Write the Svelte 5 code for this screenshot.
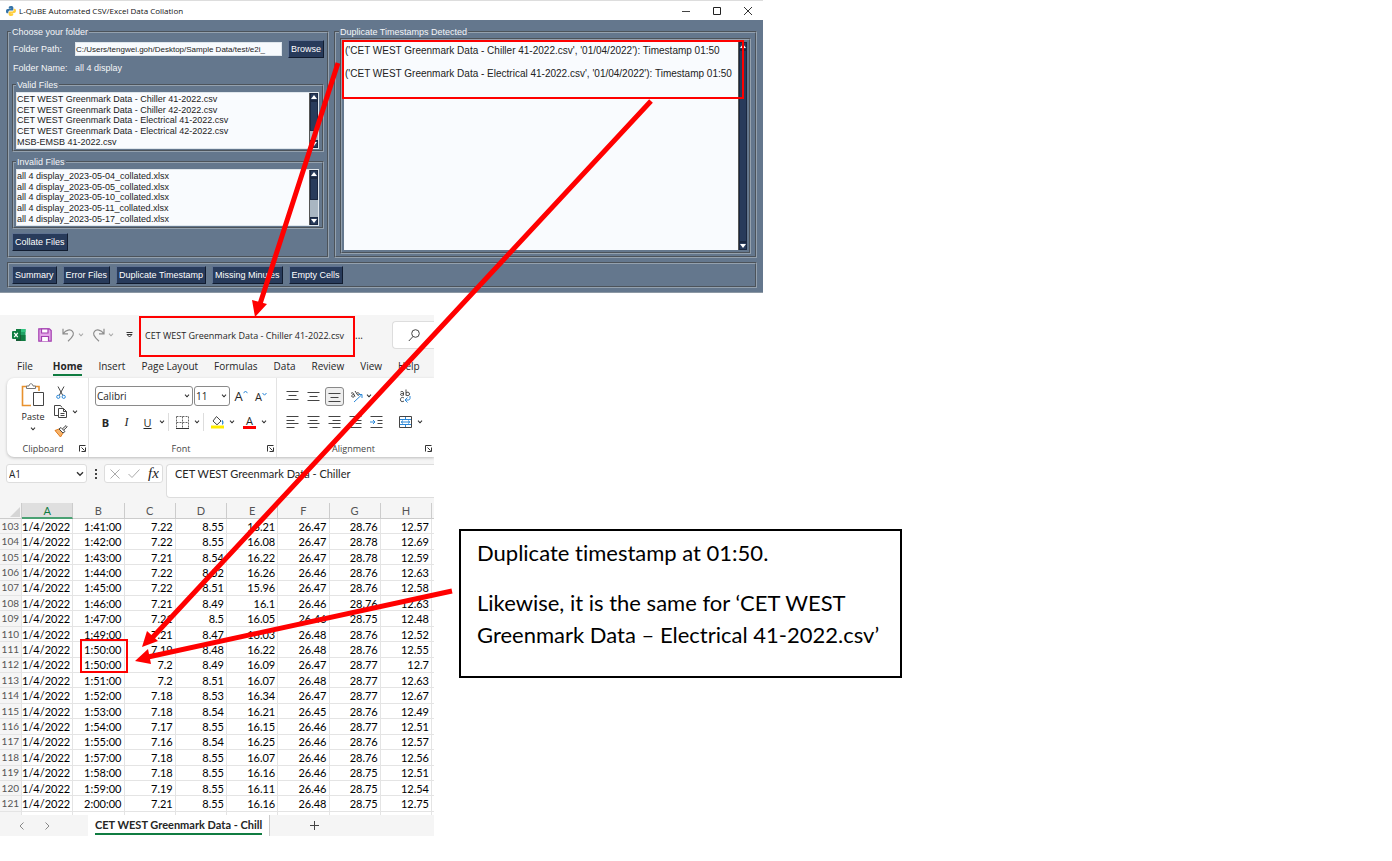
<script>
  const validFiles = [
    'CET WEST Greenmark Data - Chiller 41-2022.csv',
    'CET WEST Greenmark Data - Chiller 42-2022.csv',
    'CET WEST Greenmark Data - Electrical 41-2022.csv',
    'CET WEST Greenmark Data - Electrical 42-2022.csv',
    'MSB-EMSB 41-2022.csv'
  ];
  const invalidFiles = ['04', '05', '10', '11', '17'].map((d) => `all 4 display_2023-05-${d}_collated.xlsx`);
  const reports = ['Summary', 'Error Files', 'Duplicate Timestamp', 'Missing Minutes', 'Empty Cells'];
  const duplicates = [
    "('CET WEST Greenmark Data - Chiller 41-2022.csv', '01/04/2022'): Timestamp 01:50",
    "('CET WEST Greenmark Data - Electrical 41-2022.csv', '01/04/2022'): Timestamp 01:50"
  ];
  const tabs = ['File', 'Home', 'Insert', 'Page Layout', 'Formulas', 'Data', 'Review', 'View', 'Help'];
  const columns = ['A', 'B', 'C', 'D', 'E', 'F', 'G', 'H'];
  const readings = [
    ['1:41:00', '7.22', '8.55', '16.21', '26.47', '28.76', '12.57'],
    ['1:42:00', '7.22', '8.55', '16.08', '26.47', '28.78', '12.69'],
    ['1:43:00', '7.21', '8.54', '16.22', '26.47', '28.78', '12.59'],
    ['1:44:00', '7.22', '8.52', '16.26', '26.46', '28.76', '12.63'],
    ['1:45:00', '7.22', '8.51', '15.96', '26.47', '28.76', '12.58'],
    ['1:46:00', '7.21', '8.49', '16.1', '26.46', '28.76', '12.63'],
    ['1:47:00', '7.21', '8.5', '16.05', '26.46', '28.75', '12.48'],
    ['1:49:00', '7.21', '8.47', '16.03', '26.48', '28.76', '12.52'],
    ['1:50:00', '7.19', '8.48', '16.22', '26.48', '28.76', '12.55'],
    ['1:50:00', '7.2', '8.49', '16.09', '26.47', '28.77', '12.7'],
    ['1:51:00', '7.2', '8.51', '16.07', '26.48', '28.77', '12.63'],
    ['1:52:00', '7.18', '8.53', '16.34', '26.47', '28.77', '12.67'],
    ['1:53:00', '7.18', '8.54', '16.21', '26.45', '28.76', '12.49'],
    ['1:54:00', '7.17', '8.55', '16.15', '26.46', '28.77', '12.51'],
    ['1:55:00', '7.16', '8.54', '16.25', '26.46', '28.76', '12.57'],
    ['1:57:00', '7.18', '8.55', '16.07', '26.46', '28.76', '12.56'],
    ['1:58:00', '7.18', '8.55', '16.16', '26.46', '28.75', '12.51'],
    ['1:59:00', '7.19', '8.55', '16.11', '26.46', '28.75', '12.54'],
    ['2:00:00', '7.21', '8.55', '16.16', '26.48', '28.75', '12.75']
  ];
</script>

{#snippet chevron(tone = '#333')}
  <svg class="chev" width="6" height="4" viewBox="0 0 6 4"><path d="M1 .7 3 2.8 5 .7" fill="none" stroke={tone} stroke-width="1.1" /></svg>
{/snippet}

{#snippet launcher()}
  <button class="bare launcher" aria-label="More options">
    <svg width="7" height="7" viewBox="0 0 7 7" fill="none" stroke="#333"><path d="M.5 6.5v-6h6M2.5 2.5l3 3M6.5 2.5v4h-4" /></svg>
  </button>
{/snippet}

{#snippet lines(rows)}
  <svg width="13" height="12" viewBox="0 0 13 12" stroke="#444" fill="none"><path d={rows} /></svg>
{/snippet}

{#snippet scrollbar(kind)}
  <span class="scroll {kind}" aria-hidden="true">
    <i class="step"><svg width="6" height="4" viewBox="0 0 6 4"><path d="M0 4h6L3 0z" fill="#fff" /></svg></i>
    <i class="thumb"></i>
    <i class="step"><svg width="6" height="4" viewBox="0 0 6 4"><path d="M0 0h6L3 4z" fill="#fff" /></svg></i>
  </span>
{/snippet}

<main>
  <section class="collator" aria-label="Data collation">
    <header class="caption">
      <svg width="10" height="10" viewBox="0 0 20 20">
        <path d="M9.8 0C6 0 5.5 1.7 5.5 3v2.400h4.800v.8H3.300C1.300 6.200 0 7.700 0 10.300s1.200 4.300 3 4.300h1.700v-2.400c0-1.800 1.500-3 3.100-3h4.600c1.500 0 2.300-1.200 2.300-2.400V3c0-1.700-1.600-3-4.900-3z" fill="#3573a6" />
        <path d="M10.200 20c3.800 0 4.300-1.700 4.300-3v-2.400H9.700v-.8h7c2 0 3.300-1.500 3.300-4.100s-1.200-4.300-3-4.300h-1.700v2.400c0 1.800-1.500 3-3.100 3H7.600c-1.500 0-2.300 1.200-2.300 2.400V17c0 1.700 1.600 3 4.900 3z" fill="#ffcf3f" />
      </svg>
      <span>L-QuBE Automated CSV/Excel Data Collation</span>
      <button class="bare" aria-label="Minimize"><svg width="8" height="8" viewBox="0 0 8 8" stroke="#444"><path d="M0 4.500h8" /></svg></button>
      <button class="bare" aria-label="Maximize"><svg width="8" height="8" viewBox="0 0 8 8" fill="none" stroke="#222"><path d="M.5 .5h7v7h-7z" /></svg></button>
      <button class="bare" aria-label="Close"><svg width="8" height="8" viewBox="0 0 8 8" stroke="#333"><path d="M0 0l8 8M8 0l-8 8" /></svg></button>
    </header>

    <div class="body">
      <fieldset class="chooser">
        <legend>Choose your folder</legend>
        <div class="path">
          <label for="folder">Folder Path:</label>
          <input id="folder" value="C:/Users/tengwei.goh/Desktop/Sample Data/test/e2i_" />
          <button class="push">Browse</button>
        </div>
        <div class="path name"><span>Folder Name:</span><span>all 4 display</span></div>
        <fieldset class="files">
          <legend>Valid Files</legend>
          <div class="list">
            <ul>{#each validFiles as f}<li>{f}</li>{/each}</ul>
            {@render scrollbar('long')}
          </div>
        </fieldset>
        <fieldset class="files">
          <legend>Invalid Files</legend>
          <div class="list">
            <ul>{#each invalidFiles as f}<li>{f}</li>{/each}</ul>
            {@render scrollbar('short')}
          </div>
        </fieldset>
        <button class="push">Collate Files</button>
      </fieldset>

      <fieldset class="result">
        <legend>Duplicate Timestamps Detected</legend>
        <div class="list output">
          <div class="log">{#each duplicates as d}<p>{d}</p>{/each}</div>
          {@render scrollbar('full')}
        </div>
      </fieldset>

      <nav class="reports">
        {#each reports as r}<button class="push">{r}</button>{/each}
      </nav>
    </div>
  </section>

  <div class="lower">
    <section class="sheet" aria-label="Spreadsheet">
      <header class="quick">
        <svg class="xl" width="14" height="14" viewBox="0 0 14 14">
          <path d="M4 1h9.500v12H4z" fill="#21a366" /><path d="M4 1h5v6H4z" fill="#107c41" /><path d="M9 7h4.500v6H9z" fill="#107c41" /><path d="M4 7h5v6H4z" fill="#185c37" />
          <path d="M9 1h4.500v3H9z" fill="#33c481" /><rect y="3" width="8" height="8" rx="1" fill="#107c41" /><path d="M2.200 4.800l3.600 4.400M5.800 4.800L2.200 9.200" stroke="#fff" stroke-width="1.300" />
        </svg>
        <button class="bare save" aria-label="Save"><svg width="14" height="14" viewBox="0 0 14 14" fill="#e3a5e8" stroke="#a33fb0" stroke-width="1.200"><path d="M.8 .8h10.600l1.800 1.800v10.600H.8z" /><path d="M3.500 .8h6.500v4.200H3.500zM3.500 13.200V8.500h7v4.700" fill="#fff" /></svg></button>
        <button class="bare undo" aria-label="Undo"><svg width="13" height="14" viewBox="0 0 13 14" fill="none" stroke="#8c8c8c" stroke-width="1.200"><path d="M1 .8v5h5M1.300 5.500C4 1.500 8.500 1 10.500 3.300S11.500 8.500 6 13.200" /></svg></button>
        {@render chevron('#aaa')}
        <button class="bare redo" aria-label="Redo"><svg width="13" height="14" viewBox="0 0 13 14" fill="none" stroke="#8c8c8c" stroke-width="1.200"><path d="M12 .8v5H7M11.700 5.500C9 1.500 4.500 1 2.500 3.300S1.500 8.500 7 13.200" /></svg></button>
        {@render chevron('#aaa')}
        <button class="bare more" aria-label="Customize toolbar"><svg width="7" height="6" viewBox="0 0 7 6"><path d="M.5 .5h6" stroke="#333" /><path d="M1 2.500h5L3.500 5z" fill="none" stroke="#333" /></svg></button>
        <span class="file">CET WEST Greenmark Data - Chiller 41-2022.csv</span>
        <span class="dots">...</span>
        <button class="search" aria-label="Search"><svg width="12" height="13" viewBox="0 0 12 13" fill="none" stroke="#444"><circle cx="7.500" cy="4.500" r="3.800" /><path d="M5 7.500L.8 12" /></svg></button>
      </header>

      <nav class="tabs">
        {#each tabs as t}<button class="bare" class:on={t === 'Home'}>{t}</button>{/each}
      </nav>

      <div class="ribbon">
        <div class="group clip">
          <div class="tools">
            <button class="bare paste">
              <svg width="24" height="26" viewBox="0 0 24 26" fill="none">
                <path d="M6 3.500H1.500v19H10M13.500 3.500H18V8" stroke="#e8912d" stroke-width="1.600" />
                <path d="M5.500 5.500V3H8c0-3 4-3 4 0h2.500v2.500z" fill="#fff" stroke="#777" /><path d="M12.500 9.500h10v13h-10z" fill="#fff" stroke="#444" />
              </svg>
              Paste
              {@render chevron()}
            </button>
            <div class="side">
              <button class="bare" aria-label="Cut"><svg width="10" height="13" viewBox="0 0 10 13" fill="none"><path d="M2 .5l4.800 9M8 .5L3.200 9.500" stroke="#444" /><circle cx="2.300" cy="10.800" r="1.600" stroke="#2b88d8" /><circle cx="7.700" cy="10.800" r="1.600" stroke="#2b88d8" /></svg></button>
              <button class="bare" aria-label="Copy"><svg width="13" height="13" viewBox="0 0 13 13" fill="none" stroke="#444"><path d="M4 10.500H.5V.5h6l1.500 2" /><path d="M4.500 3.500h5l3 3v6h-8zM9.500 3.500v3h3M6.500 8.500h4M6.500 10.500h4" /></svg></button>
              {@render chevron()}
              <button class="bare" aria-label="Format painter"><svg width="14" height="12" viewBox="0 0 14 12"><path d="M1 5.500L5 4l4 4-2.500 4z" fill="#f6b36b" stroke="#e07a1a" /><path d="M5 4l2-1.500 4 4L9 8zM8.500 3.800L12 .6l1.200 1.200L9.800 5" fill="#fff" stroke="#444" /></svg></button>
            </div>
          </div>
          <footer><span>Clipboard</span>{@render launcher()}</footer>
        </div>

        <div class="group font">
          <div class="rowa">
            <span class="combo wide"><select aria-label="Font name"><option>Calibri</option></select>{@render chevron()}</span>
            <span class="combo"><select aria-label="Font size"><option>11</option></select>{@render chevron()}</span>
            <button class="bare grow" aria-label="Increase font size">A<svg width="5" height="4" viewBox="0 0 5 4"><path d="M.5 3.200L2.500 1l2 2.200" fill="none" stroke="#2b88d8" /></svg></button>
            <button class="bare grow small" aria-label="Decrease font size">A<svg width="5" height="4" viewBox="0 0 5 4"><path d="M.5 1L2.500 3.200l2-2.200" fill="none" stroke="#2b88d8" /></svg></button>
          </div>
          <div class="rowb">
            <button class="bare w21"><b>B</b></button>
            <button class="bare w21"><em>I</em></button>
            <button class="bare w21"><u>U</u></button>
            {@render chevron()}
            <i class="bar"></i>
            <button class="bare w21" aria-label="Borders"><svg width="13" height="13" viewBox="0 0 13 13" fill="none" stroke="#666"><path d="M.5 .5h12M.5 6.500h12M.5 .5v12M6.500 .5v12M12.500 .5v12" stroke-dasharray="2 1" /><path d="M0 12.500h13" stroke="#333" /></svg></button>
            {@render chevron()}
            <i class="bar"></i>
            <button class="bare w21" aria-label="Fill colour"><svg width="14" height="14" viewBox="0 0 14 14" fill="none"><path d="M5.500 1.500l4.500 4.500-4 3.800L2 6z" stroke="#444" /><path d="M11 5.500c1.500 2 .8 3.500 0 3.500" stroke="#2b88d8" stroke-width="1.300" /><path d="M0 12h13" stroke="#ffed00" stroke-width="3" /></svg></button>
            {@render chevron()}
            <button class="bare ink" aria-label="Font colour">A</button>
            {@render chevron()}
          </div>
          <footer><span>Font</span>{@render launcher()}</footer>
        </div>

        <div class="group align">
          <div class="rowa">
            <button class="bare w21" aria-label="Top align">{@render lines('M.5 1.500h12M2.500 5.500h8M.5 9.500h12')}</button>
            <button class="bare w21" aria-label="Middle align">{@render lines('M.5 2.500h12M2.500 6.500h8M.5 10.500h12')}</button>
            <button class="bare w21 picked" aria-label="Bottom align">{@render lines('M.5 3.500h12M2.500 7.500h8M.5 11.500h12')}</button>
            <button class="bare w21" aria-label="Orientation"><svg width="14" height="13" viewBox="0 0 14 13" fill="none"><path d="M2 3.500c1-1.500 3-.5 3 1L6 6.500M4.800 4.500c-2 0-2.800 1.500-1.500 2.500s2.500-1 2-2M6 1l3 4.500M7.500 3.500c1.500-2 4 0 2 2" stroke="#444" /><path d="M5 12l7.500-7M9.500 4.500H13V8" stroke="#2b88d8" /></svg></button>
            {@render chevron()}
            <i class="bar none"></i>
            <button class="bare w21" aria-label="Wrap text"><svg width="12" height="14" viewBox="0 0 12 14" fill="none"><path d="M1.500 3c2-1.500 3 0 3 1v2.500M4.500 4.500c-2-.2-3 0-3 1s2 1.300 3 0M7 .5v6M7 4c1-1.500 3.500-1 3.500 1S8 7 7 6M5 9c-2-1.500-3.800 0-3.500 2s2 2 3.500 1" stroke="#444" /><path d="M11 7v2.500c0 1-1 1.500-2 1.500H6.500M8.500 8.500L6 11l2.500 2.500" stroke="#2b88d8" /></svg></button>
          </div>
          <div class="rowb">
            <button class="bare w21" aria-label="Align left">{@render lines('M.5 .5h12M.5 4.500h8M.5 7.500h12M.5 11.500h8')}</button>
            <button class="bare w21" aria-label="Center">{@render lines('M.5 .5h12M2.500 4.500h8M.5 7.500h12M2.500 11.500h8')}</button>
            <button class="bare w21" aria-label="Align right">{@render lines('M.5 .5h12M4.500 4.500h8M.5 7.500h12M4.500 11.500h8')}</button>
            <button class="bare w21" aria-label="Decrease indent">{@render lines('M.5 .5h12M6.500 4.500h6M6.500 7.500h6M.5 11.500h12')}</button>
            <button class="bare w21" aria-label="Increase indent"><svg width="13" height="12" viewBox="0 0 13 12" fill="none" stroke="#444"><path d="M.5 .5h12M7.500 4.500h5M7.500 7.500h5M.5 11.500h12" /><path d="M0 6h5M3 4l2 2-2 2" stroke="#2b88d8" /></svg></button>
            <i class="gap"></i>
            <button class="bare w21" aria-label="Merge and center"><svg width="13" height="12" viewBox="0 0 13 12" fill="none" stroke="#2b88d8"><path d="M.5 .5h12v11H.5z" stroke="#444" /><path d="M1 3.500h11M1 8.500h11M6.500 1v2M6.500 9v2M2 6h9M4 4.500L2.300 6 4 7.500M9 4.500L10.700 6 9 7.500" /></svg></button>
            {@render chevron()}
          </div>
          <footer><span>Alignment</span>{@render launcher()}</footer>
        </div>
      </div>

      <div class="formula">
        <span class="combo cell"><select aria-label="Name box"><option>A1</option></select><svg class="chev" width="8" height="6" viewBox="0 0 8 6"><path d="M1 1.200l3 3 3-3" fill="none" stroke="#333" stroke-width="1.400" /></svg></span>
        <svg class="grip" width="2" height="10" viewBox="0 0 2 10" fill="#444"><path d="M0 0h2v2H0zM0 4h2v2H0zM0 8h2v2H0z" /></svg>
        <span class="fx">
          <svg width="10" height="10" viewBox="0 0 10 10" stroke="#aaa"><path d="M.5 .5l9 9M9.500 .5l-9 9" /></svg>
          <svg width="12" height="9" viewBox="0 0 12 9" fill="none" stroke="#aaa"><path d="M.5 5l3.500 3.500L11.500 .5" /></svg>
          <em>fx</em>
        </span>
        <input class="entry" aria-label="Formula bar" value="CET WEST Greenmark Data - Chiller" />
      </div>

      <table>
        <colgroup><col class="num" />{#each columns as _}<col />{/each}<col class="rest" /></colgroup>
        <thead>
          <tr><th><svg width="10" height="10" viewBox="0 0 10 10"><path d="M10 0v10H0z" fill="#d5d5d5" /></svg></th>{#each columns as c}<th class:on={c === 'A'}>{c}</th>{/each}<th></th></tr>
        </thead>
        <tbody>
          {#each readings as r, i}
            <tr><th>{103 + i}</th><td>1/4/2022</td>{#each r as v}<td>{v}</td>{/each}<td></td></tr>
          {/each}
          <tr class="sliver"><th></th>{#each columns as _}<td></td>{/each}<td></td></tr>
        </tbody>
      </table>

      <footer class="sheets">
        <button class="bare" aria-label="Previous sheet"><svg width="5" height="8" viewBox="0 0 5 8"><path d="M4.500 .5L1 4l3.500 3.500" fill="none" stroke="#888" /></svg></button>
        <button class="bare" aria-label="Next sheet"><svg width="5" height="8" viewBox="0 0 5 8"><path d="M.5 .5L4 4 .5 7.500" fill="none" stroke="#888" /></svg></button>
        <button class="bare current"><span>CET WEST Greenmark Data - Chill</span></button>
        <button class="bare add" aria-label="New sheet"><svg width="9" height="9" viewBox="0 0 9 9"><path d="M4.500 0v9M0 4.500h9" stroke="#444" /></svg></button>
      </footer>
    </section>

    <aside>
      <p>Duplicate timestamp at 01:50.</p>
      <p>Likewise, it is the same for ‘CET WEST Greenmark Data – Electrical 41-2022.csv’</p>
    </aside>
  </div>

  <!-- Call-outs drawn across both windows -->
  <svg class="marks" width="763" height="700" viewBox="0 0 763 700" aria-hidden="true">
    <g fill="none" stroke="#f00" stroke-width="2">
      <path d="M343 41h400v57H343zM140 317h214v39H140zM81 640h46v32H81z" />
      <path d="M338 63L260 304M651 101L152 638M452 591L148 657" stroke-width="5" />
    </g>
    <g fill="#f00"><path d="M255 317l-3-17 15 4zM142 647l5-16 11 10zM135 661l13-12 3 15z" /></g>
  </svg>
</main>

<style>
  :global(body) { margin: 0; background: #fff; }
  * { box-sizing: border-box; }
  main { position: relative; font-family: "Open Sans", "Noto Sans", sans-serif; color: #262626; }
  button, input, select { font: inherit; color: inherit; margin: 0; }
  svg { display: block; flex: none; }
  .bare { border: 0; padding: 0; background: none; display: flex; align-items: center; justify-content: center; }
  .marks { position: absolute; left: 0; top: 0; pointer-events: none; }

  .collator { max-width: 763px; }
  .caption { display: flex; align-items: center; height: 20px; padding: 0 11px 0 6px; font-size: 8px; color: #111; border-top: 1px solid #ddd; }
  .caption span { flex: 1; margin-left: 3px; }
  .caption button { width: 8px; margin-left: 23px; }
  .body {
    display: grid; grid-template-columns: 322px 1fr; gap: 4px 5px; padding: 6px 6px 4px 7px; background: #64778d;
    border-bottom: 1px solid #8c98a4; font: 9px "Liberation Sans", Arial, sans-serif; color: #f4f6f8;
  }
  fieldset, .reports { margin: 0; min-width: 0; border: 2px groove #94a1ae; }
  legend { padding: 0 1px; line-height: 12px; }
  .chooser { padding: 2px 3px 5px 3px; }
  .chooser > legend, .result > legend { margin-left: -1px; }
  .path { display: flex; align-items: center; height: 18px; padding-left: 1px; }
  .path > :first-child { width: 62px; }
  .path input { flex: 1; min-width: 0; height: 14px; padding: 0; border: 1px solid #dfe6ec; background: #f7fafd; color: #222; margin-right: 6px; font-size: 8px; }
  .name { height: 20px; margin-bottom: 1px; }
  .push { height: 18px; padding: 0 2px; border: 1px solid; border-color: #5e7190 #111c30 #111c30 #5e7190; background: #283b5b; color: #fff; line-height: 12px; white-space: nowrap; }
  .files { padding: 1px 3px 1px 2px; margin-bottom: 4px; }
  .list { display: flex; background: #f9fbfe; color: #222; border: 1px solid #dfe6ec; height: 57px; }
  ul { flex: 1; margin: 0; padding: 1px 0 1px 0; list-style: none; display: grid; grid-auto-rows: 1fr; align-items: center; line-height: 10px; }
  .scroll { width: 9px; display: flex; flex-direction: column; background: #a9b6c2; border-left: 1px solid #555; }
  .scroll i { display: flex; align-items: center; justify-content: center; background: #283b5b; border: 1px solid #1a2740; }
  .step { height: 8px; flex: none; }
  .long .thumb { flex: 0 0 30px; }
  .short .thumb { flex: 0 0 22px; }
  .full .thumb { flex: 1; }
  .scroll .step:last-child { margin-top: auto; }
  .result { display: flex; flex-direction: column; padding: 0 4px 2px 4px; }
  .output { flex: 1; height: auto; padding: 2px; border: 2px groove #94a1ae; background: none; font-size: 10px; margin: 0; }
  .log { flex: 1; padding: 2px 1px; background: #f9fbfe; }
  .log p { margin: 0 0 10px; line-height: 13px; }
  .reports { grid-column: 1 / -1; display: flex; gap: 6px; padding: 2px 3px; }

  .lower { display: flex; align-items: flex-start; gap: 25px; margin-top: 22px; }
  .sheet { flex: 0 1 434px; min-width: 0; overflow: hidden; background: #f5f5f5; font-size: 10px; }
  .quick { display: flex; align-items: center; height: 40px; padding-left: 12px; white-space: nowrap; }
  .save { margin: 0 10px 0 12px; }
  .undo, .redo { margin-right: 3px; }
  .redo { margin-left: 8px; }
  .more { margin: 0 12px 0 12px; }
  .file { flex: 1; font-size: 9px; }
  .dots { width: 37px; }
  .search { width: 42px; height: 28px; display: flex; align-items: center; justify-content: center; background: #fff; border: 1px solid #ddd; border-right: 0; border-radius: 4px 0 0 4px; padding: 0; }
  .tabs { display: flex; gap: 16px; padding: 2px 0 0 17px; height: 23px; font-size: 10px; white-space: nowrap; }
  .tabs button { height: 19px; border-bottom: 2px solid transparent; }
  .tabs .on { font-weight: 700; border-color: #107c41; margin-left: 4px; }
  .ribbon { display: flex; margin-left: 7px; height: 79px; background: #fff; border-radius: 7px 0 0 7px; box-shadow: 0 1px 3px #bbb; }
  .group { display: flex; flex-direction: column; padding-top: 5px; }
  .group + .group { border-left: 1px solid #e3e3e3; }
  .clip { width: 81px; }
  .font { width: 188px; padding-left: 6px; }
  .align { flex: 1; padding-left: 5px; }
  .group footer { display: flex; align-items: center; margin-top: auto; height: 17px; font-size: 9px; color: #444; }
  .group footer span { flex: 1; text-align: center; }
  .launcher { width: 7px; margin-right: 2px; }
  .tools { display: flex; padding-left: 14px; }
  .paste { flex-direction: column; justify-content: flex-start; gap: 1px; font-size: 9px; line-height: 13px; width: 24px; }
  .paste .chev { margin-top: 3px; }
  .side { display: grid; grid-template-columns: 15px 6px; grid-auto-rows: 19px; column-gap: 4px; align-items: center; margin-left: 8px; justify-items: center; }
  .side > :first-child { grid-area: 1 / 1 / 2 / 2; }
  .side > :nth-child(2) { grid-area: 2 / 1; }
  .side > :nth-child(3) { grid-area: 2 / 2; }
  .side > :nth-child(4) { grid-area: 3 / 1; }
  .rowa, .rowb { display: flex; align-items: center; height: 26px; }
  .rowb .chev { margin-left: 1px; }
  .combo { display: grid; align-items: center; width: 36px; height: 20px; margin-right: 1px; background: #fff; border: 1px solid #8a8a8a; border-radius: 3px; }
  .combo > :global(*) { grid-area: 1 / 1; }
  .combo > :global(svg) { justify-self: end; margin-right: 2px; }
  .combo select { appearance: none; width: 100%; border: 0; background: none; padding: 0 1px; line-height: 16px; }
  .wide { width: 98px; }
  .grow { width: 20px; font-size: 13px; align-items: center; }
  .grow svg { align-self: flex-start; margin-top: 3px; }
  .small { font-size: 11px; }
  .w21 { width: 21px; font-size: 11px; }
  .picked { height: 19px; width: 19px; margin: 0 1px; background: #eee; border: 1px solid #888; border-radius: 3px; }
  .bar { width: 1px; height: 18px; margin: 0 3px; background: #ddd; }
  .none { margin-left: 18px; background: none; }
  .gap { width: 8px; }
  .ink { height: 14px; font-size: 11px; line-height: 11px; border-bottom: 3px solid #f00; width: 13px; margin: 0 4px 0 8px; }
  em { font-family: "Liberation Serif", serif; font-size: 12px; }
  .formula { display: flex; align-items: flex-start; height: 46px; padding: 7px 0 0 6px; font-size: 10px; }
  .cell { width: 81px; height: 19px; border-color: #ddd; margin: 0; }
  .cell select { padding-left: 2px; }
  .grip { margin: 5px 7px 0 8px; }
  .fx { display: flex; align-items: center; gap: 8px; width: 59px; height: 19px; padding-left: 5px; background: #fff; border: 1px solid #ddd; border-radius: 3px; }
  .fx em { font-size: 15px; color: #222; line-height: 15px; }
  .entry { flex: 1; min-width: 0; height: 34px; margin-left: 3px; padding: 0 8px 15px; background: #fff; border: 1px solid #ddd; border-right: 0; border-radius: 4px 0 0 4px; font: 11px Lato, sans-serif; }
  table { table-layout: fixed; width: 100%; height: 312px; border-collapse: separate; border-spacing: 0; background: #fff; font: 11px/13px Lato, sans-serif; color: #000; }
  .num { width: 22px; }
  .rest { width: 2px; }
  td, th { padding: 0 2px 0 0; text-align: right; font-weight: 400; border: 0 solid #e4e4e4; border-width: 0 1px 1px 0; }
  th { background: #f5f5f5; color: #555; }
  tbody th { font-size: 10px; }
  thead th { height: 16px; text-align: center; border-color: #ccc; padding: 0; }
  thead svg { margin: 2px 1px 0 auto; }
  thead .on { background: #dfdfdf; color: #107c41; border-bottom: 2px solid #4aa173; }
  td:last-child, th:last-child { padding: 0; border-right: 0; }
  .sliver > * { height: 3px; border-bottom: 0; }
  .sheets { display: flex; height: 21px; }
  .sheets button { width: 26px; }
  .sheets button:first-child { margin-left: 8px; }
  .sheets .current { width: auto; margin-left: 28px; padding: 0 7px; background: #fff; font: 700 11px Lato, sans-serif; border-right: 1px solid #ccc; align-items: flex-start; }
  .current span { line-height: 20px; height: 20px; border-bottom: 2px solid #107c41; white-space: nowrap; }
  .sheets .add { margin-left: 31px; }

  aside { flex: 0 1 443px; min-height: 149px; margin-top: 214px; padding: 6px 16px; border: 2px solid #000; background: #fff; color: #000; font: 22px/32px Lato, sans-serif; font-variant-ligatures: none; }
  aside p { margin: 0 0 18px; }
</style>
